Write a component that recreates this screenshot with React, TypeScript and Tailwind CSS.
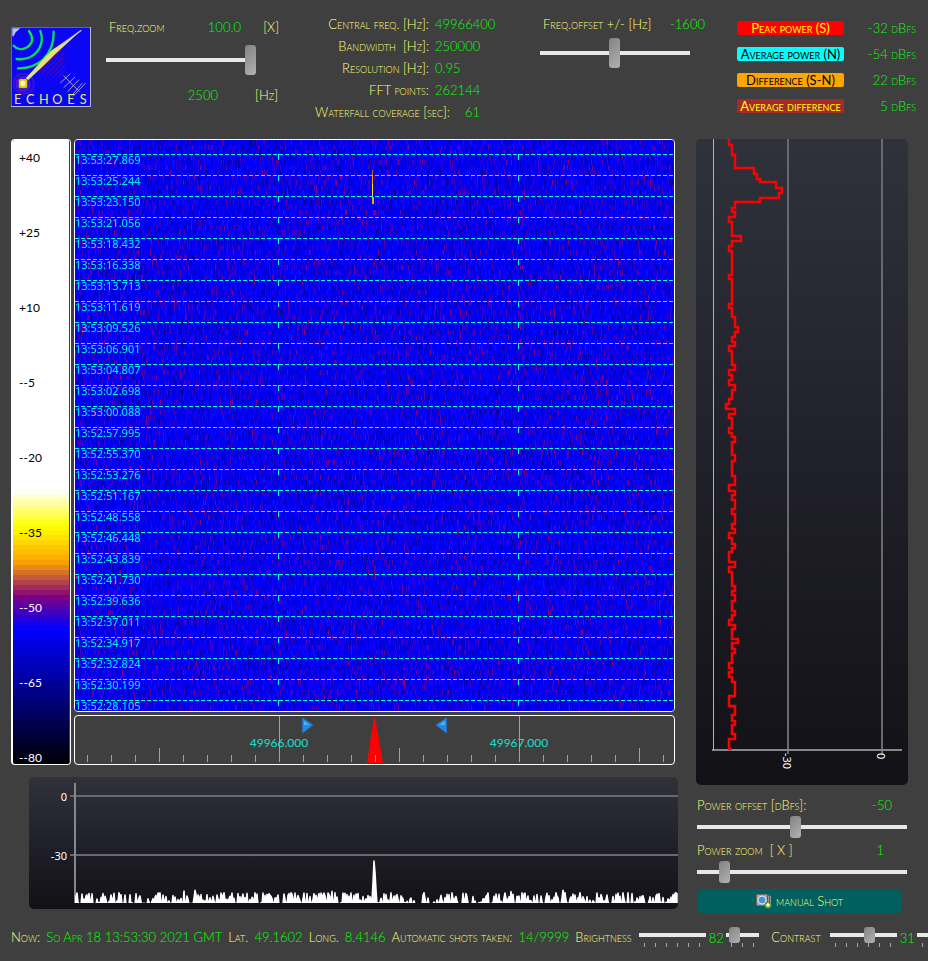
import { useLayoutEffect, useRef, useState } from "react";
import clsx from "clsx";

const times = [
  "13:53:27.869", "13:53:25.244", "13:53:23.150", "13:53:21.056", "13:53:18.432", "13:53:16.338",
  "13:53:13.713", "13:53:11.619", "13:53:09.526", "13:53:06.901", "13:53:04.807", "13:53:02.698",
  "13:53:00.088", "13:52:57.995", "13:52:55.370", "13:52:53.276", "13:52:51.167", "13:52:48.558",
  "13:52:46.448", "13:52:43.839", "13:52:41.730", "13:52:39.636", "13:52:37.011", "13:52:34.917",
  "13:52:32.824", "13:52:30.199", "13:52:28.105",
];

const scaleLabels = ["+40", "+25", "+10", "--5", "--20", "--35", "--50", "--65", "--80"];

// palette stops: distance from the top of the scale in px, then r, g, b
const stops = [
  [350, 255, 255, 255],
  [386, 255, 255, 0],
  [421, 255, 165, 0],
  [456, 128, 0, 128],
  [488, 0, 0, 255],
  [626, 0, 0, 0],
];

// power history: [dB step, end of the step in px]
const history = [
  [1, 6], [2, 16], [3, 29], [9, 35], [10, 40], [11, 43], [16, 49], [18, 54], [17, 59], [11, 63],
  [3, 69], [2, 73], [3, 78], [1, 83], [2, 97], [5, 102], [2, 107], [1, 112], [2, 136], [1, 140],
  [2, 165], [1, 169], [2, 178], [3, 188], [4, 193], [3, 198], [2, 203], [3, 207], [1, 212], [2, 226],
  [3, 231], [1, 236], [2, 241], [1, 246], [3, 251], [2, 260], [1, 265], [0, 270], [3, 275], [1, 279],
  [2, 289], [1, 294], [2, 298], [3, 303], [2, 316], [3, 322], [2, 337], [3, 346], [1, 352], [3, 356],
  [2, 361], [3, 370], [2, 375], [3, 385], [2, 390], [3, 394], [1, 399], [2, 405], [3, 409], [2, 413],
  [1, 423], [3, 428], [1, 433], [2, 447], [3, 452], [2, 456], [3, 462], [2, 472], [3, 476], [2, 481],
  [1, 486], [3, 490], [2, 500], [4, 504], [2, 510], [3, 514], [2, 524], [1, 529], [2, 533], [1, 538],
  [2, 543], [3, 557], [1, 567], [3, 576], [2, 582], [3, 586], [2, 595], [3, 600], [1, 610],
];

const caps = "[font-variant:small-caps]";

const createRandom = (seed: number) => () => {
  seed = (seed * 1664525 + 1013904223) % 4294967296;
  return seed / 4294967296;
};

const paletteColor = (y: number) => {
  if (y <= stops[0][0]) return "#fff";
  const next = stops.findIndex((stop) => stop[0] > y);
  const from = stops[next - 1];
  const to = stops[next];
  const t = (y - from[0]) / (to[0] - from[0]);
  const mix = [1, 2, 3].map((i) => Math.round(from[i] + (to[i] - from[i]) * t));
  return `rgb(${mix.join(",")})`;
};

interface SliderProps {
  label: string;
  min: number;
  max: number;
  value: number;
  onChange: (value: number) => void;
  className?: string;
}

const Slider = ({ label, min, max, value, onChange, className }: SliderProps) => (
  <input
    type="range"
    aria-label={label}
    min={min}
    max={max}
    value={value}
    onChange={(e) => onChange(Number(e.target.value))}
    className={clsx(
      "block appearance-none bg-[linear-gradient(#e6e9e7,#e6e9e7)] bg-[length:100%_4px] bg-center bg-no-repeat",
      "[&::-webkit-slider-thumb]:appearance-none [&::-webkit-slider-thumb]:w-[11px] [&::-webkit-slider-thumb]:rounded-[3px]",
      "[&::-webkit-slider-thumb]:bg-[linear-gradient(135deg,#828282,#b2b2b2)]",
      className
    )}
  />
);

const Logo = () => (
  <svg viewBox="0 0 240 240" className="size-20 shrink-0" role="img" aria-label="Echoes">
    <rect width="240" height="240" fill="#0b06f4" />
    <path d="M1.500 240V1.500H240" fill="none" stroke="#5a5af0" strokeWidth="3" />
    <path d="M0 238.500H238.500V0" fill="none" stroke="#b9b9f5" strokeWidth="3" />
    <path d="M4 4H28L14 16L8 28H4Z" fill="#b8c8d8" />
    <g fill="none" stroke="#08e04c" strokeWidth="7" strokeLinecap="round">
      <path d="M54 12C68 32 66 48 50 60C34 70 18 68 8 56" />
      <path d="M88 12C98 38 90 66 70 82C52 97 34 98 17 96" />
      <path d="M128 14C129 48 118 76 96 98C74 118 50 125 21 124" />
    </g>
    <g stroke="#6c0a92" strokeWidth="3">
      <path d="M152 68L86 134M160 76L90 142M158 90L104 144M162 100L116 146M162 114L128 148M162 130L142 150M148 70L110 108" />
    </g>
    <g fill="none" stroke="#5a16c8" strokeWidth="6">
      <circle cx="36" cy="171" r="20" />
      <circle cx="38" cy="170" r="30" opacity=".6" />
    </g>
    <path d="M211 10L122 70L84 110L44 154L52 159L100 114L130 84Z" fill="#e6e27a" />
    <path d="M211 10L150 54" stroke="#c9c9a4" strokeWidth="4" />
    <rect x="23" y="156" width="26" height="28" rx="6" fill="#e9c800" />
    <rect x="29" y="161" width="14" height="16" rx="5" fill="#fffbc4" />
    <g stroke="#a0a0d8" strokeWidth="3">
      <path d="M158 146L205 194M178 140L148 168M192 150L158 182M204 158L170 194M214 168L182 206M224 168L186 208" />
    </g>
    <text y="232" fontSize="38" fill="#ecec62" fontWeight="400" fontFamily="Lato, sans-serif">
      {["E", "C", "H", "O", "E", "S"].map((letter, i) => (
        <tspan key={i} x={[9, 45, 84, 124, 169, 206][i]}>{letter}</tspan>
      ))}
    </text>
  </svg>
);

const Waterfall = () => {
  const ref = useRef<HTMLCanvasElement>(null);

  useLayoutEffect(() => {
    const canvas = ref.current;
    const ctx = canvas?.getContext("2d");
    if (!canvas || !ctx) return;
    const { width, height } = canvas;
    const random = createRandom(49966400);

    for (let y = 0; y < height; y += 5) {
      for (let x = 0; x < width; x++) {
        const r = random();
        if (r < 0.36) ctx.fillStyle = "#0000ff";
        else if (r < 0.52) ctx.fillStyle = "#0000e6";
        else if (r < 0.66) ctx.fillStyle = "#0000d0";
        else if (r < 0.7) ctx.fillStyle = "#0000a8";
        else if (r < 0.83) ctx.fillStyle = "#1c00e3";
        else if (r < 0.9) ctx.fillStyle = "#3a00c5";
        else if (r < 0.93) ctx.fillStyle = "#5a00a6";
        else if (r < 0.94) ctx.fillStyle = "#800080";
        else ctx.fillStyle = "#0000f0";
        ctx.fillRect(x, y, 1, 5);
      }
    }

    // meteor echo
    ctx.fillStyle = "#c06030";
    ctx.fillRect(297, 30, 1, 10);
    ctx.fillStyle = "#ffa500";
    ctx.fillRect(297, 35, 1, 25);
    ctx.fillStyle = "#ffe800";
    ctx.fillRect(297, 44, 1, 16);
    ctx.fillStyle = "#ffa500";
    ctx.fillRect(297, 57, 2, 7);

    ctx.fillStyle = "#00ffff";
    for (let y = 14; y < height; y += 21) {
      for (let x = 0; x < width; x += 6) ctx.fillRect(x, y, 4, 1);
      ctx.fillRect(203, y, 1, 6);
      ctx.fillRect(443, y, 1, 6);
    }
  }, []);

  return (
    <div className="relative h-[573px] overflow-hidden rounded-sm border border-white">
      <canvas ref={ref} width={599} height={571} className="h-full w-full" />
      <ul className="absolute inset-x-0 top-3.5 font-['Noto_Sans'] text-[11px] leading-[11px] font-normal text-[#00f0ff]">
        {times.map((time) => (
          <li key={time} className="h-[21px]">{time}</li>
        ))}
      </ul>
    </div>
  );
};

const Palette = () => (
  <div className="relative h-[626px] w-15 overflow-hidden rounded-sm border-y border-r border-l-2 border-white">
    <div className="border-r border-[#3f3f3f]">
      {Array.from({ length: 125 }, (_, i) => (
        <div key={i} className="h-[5px]" style={{ background: paletteColor(i * 5 + 2) }} />
      ))}
    </div>
    <ul className="absolute inset-x-0 top-2 text-[12px] leading-5 font-normal">
      {scaleLabels.map((label, i) => (
        <li key={label} className={clsx("h-[75px] pl-1.5", i > 5 ? "text-white" : "text-black")}>{label}</li>
      ))}
    </ul>
  </div>
);

const Ruler = () => (
  <div className="h-[50px] rounded-sm border border-white">
    <svg viewBox="0 0 599 48" className="block h-full w-full">
      <path d="M292 47L299 1H300L308 47Z" fill="#f00" />
      {Array.from({ length: 25 }, (_, i) => {
        const top = i % 10 === 8 ? 0 : i % 5 === 3 ? 32 : 39;
        return <rect key={i} x={12 + i * 24} y={top} width="1" height={46 - top} fill="#a0a0a0" />;
      })}
      <path d="M227.500 2L238 9L227.500 17Z" fill="#1f8ce0" stroke="#2c6fb8" />
      <path d="M229 5L235 9H229Z" fill="#4db4f5" />
      <path d="M371.500 2L361 9L371.500 17Z" fill="#1f8ce0" stroke="#2c6fb8" />
      <path d="M370 5L364 9H370Z" fill="#4db4f5" />
      <g fill="#16e0d0" fontFamily="Lato, sans-serif" fontSize="12" fontWeight="400" textAnchor="middle">
        <text x="204" y="31">49966.000</text>
        <text x="444" y="31">49967.000</text>
      </g>
    </svg>
  </div>
);

const Spectrum = () => {
  const random = createRandom(262144);
  let line = "M46 125";
  for (let x = 47; x < 649; x++) {
    let y = 127 - Math.max(0, random() - 0.4) * 19;
    if (random() > 0.94) y -= 5;
    if (x === 344) y = 105;
    if (x === 345) y = 84;
    if (x === 346) y = 95;
    if (x === 347) y = 112;
    line += `L${x} ${y.toFixed(1)}`;
  }

  return (
    <div className="mt-3 ml-[18px] h-[132px] overflow-hidden rounded-[5px] bg-linear-to-b from-[#2f323b] via-[#20202a] to-[#121116]">
      <svg viewBox="0 0 649 132" className="block h-full w-full">
        <clipPath id="plot">
          <rect x="46" width="603" height="126" />
        </clipPath>
        <path d="M41 19H649M41 78H649" stroke="#68686e" strokeWidth="2" />
        <path d="M46 6V126" stroke="#86878c" strokeWidth="2" />
        <path d={`${line}V127H46Z`} clipPath="url(#plot)" fill="#fff" stroke="#fff" strokeWidth="1.500" strokeLinejoin="round" />
        <g fill="#fff" fontFamily="'Noto Sans', sans-serif" fontSize="11" fontWeight="400" textAnchor="end">
          <text x="38" y="24">0</text>
          <text x="38" y="83">-30</text>
        </g>
      </svg>
    </div>
  );
};

const PowerHistory = () => {
  let line = "M33 0";
  history.forEach(([level, end]) => {
    const x = Math.round(29.500 + level * 3.15);
    line += `H${x}V${end}`;
  });

  return (
    <div className="h-[646px] overflow-hidden rounded-[5px] bg-linear-to-b from-[#2f323b] via-[#20202a] to-[#121116]">
      <svg viewBox="0 0 212 646" className="block h-full w-full">
        <path d="M92 0V615M186 0V615" stroke="#68686e" strokeWidth="2" />
        <path d="M16 611H206" stroke="#86878c" strokeWidth="2" />
        <path d="M17.500 0V611" stroke="#00ffff" />
        <path d={`${line}H36`} fill="none" stroke="#f00" strokeWidth="2.500" />
        <g fill="#fff" fontFamily="'Noto Sans', sans-serif" fontSize="11" fontWeight="400">
          <text transform="translate(87 614) rotate(90)">-30</text>
          <text transform="translate(181 614) rotate(90)">0</text>
        </g>
      </svg>
    </div>
  );
};

const CameraIcon = () => (
  <svg viewBox="0 0 16 16" className="size-4">
    <rect x="0.500" y="1.500" width="12" height="11" rx="1" fill="#a8a8a8" stroke="#6f6f6f" />
    <rect x="11" y="2" width="4" height="10" fill="#5b5b5b" />
    <path d="M12.500 3V11M14.500 3V11" stroke="#999" />
    <circle cx="6" cy="7" r="4" fill="#4f8fd8" stroke="#dceaf8" />
    <circle cx="12" cy="12" r="3.500" fill="#5f9a2a" />
    <path d="M12 10V14M10 12H14" stroke="#fff" strokeWidth="1.400" />
  </svg>
);

const settings = [
  { label: "Central freq. [Hz]:", value: "49966400" },
  { label: "Bandwidth  [Hz]:", value: "250000" },
  { label: "Resolution [Hz]:", value: "0.95" },
  { label: "FFT points:", value: "262144" },
];

const powers = [
  { label: "Peak power (S)", value: "-32 dBfs", className: "bg-[#ff0000] text-[#ffff00]" },
  { label: "Average power (N)", value: "-54 dBfs", className: "bg-[#00ffff] text-black" },
  { label: "Difference (S-N)", value: "22 dBfs", className: "bg-[#ffa500] text-black" },
  { label: "Average difference", value: "5 dBfs", className: "bg-[#a52a2a] text-[#ffff00]" },
];

interface TickSliderProps {
  label: string;
  value: number;
  onChange: (value: number) => void;
}

const TickSlider = ({ label, value, onChange }: TickSliderProps) => (
  <div className="relative w-30 shrink-0">
    <Slider label={label} min={0} max={100} value={value} onChange={onChange} className="h-4 w-full [&::-webkit-slider-thumb]:h-4" />
    <div className="flex justify-between px-[5px]">
      {Array.from({ length: 11 }, (_, i) => <i key={i} className="h-1 w-px bg-[#a8a890]" />)}
    </div>
    <output className="absolute top-0.5 left-[67px] h-[18px] w-5 bg-[#3f3f3f] text-center leading-[18px] text-[#00ff00]">{value}</output>
  </div>
);

export default function App() {
  const [zoom, setZoom] = useState(100);
  const [offset, setOffset] = useState(-1600);
  const [powerOffset, setPowerOffset] = useState(-50);
  const [powerZoom, setPowerZoom] = useState(1);
  const [brightness, setBrightness] = useState(82);
  const [contrast, setContrast] = useState(31);

  return (
    <div className={clsx("min-h-screen overflow-hidden bg-[#3f3f3f] font-[Lato,sans-serif] text-[13px] leading-5 font-light text-[#ffff78]", caps)}>
      <header className="flex h-[139px] gap-8 pr-3 pl-[11px] whitespace-nowrap">
        <div className="flex gap-[15px] pt-[27px]">
          <Logo />
          <div className="-mt-[10px] w-[177px]">
            <div className="flex pl-[3px]">
              <span className="w-[55px] overflow-hidden">Freq.zoom</span>
              <span className="w-[77px] text-right text-[#00ff00]">{zoom.toFixed(1)}</span>
              <span className="w-[38px] text-right">[X]</span>
            </div>
            <Slider label="Frequency zoom" min={1} max={100} value={zoom} onChange={setZoom} className="mt-[7px] h-8 w-[150px] [&::-webkit-slider-thumb]:h-[30px]" />
            <div className="mt-[9px] flex">
              <span className="w-28 text-right text-[#00ff00]">2500</span>
              <span className="w-15 text-right">[Hz]</span>
            </div>
          </div>
        </div>
        <div className="w-[193px] pt-3.5">
          {settings.map(({ label, value }) => (
            <div key={label} className="flex h-[22px] gap-1.5">
              <span className="w-[114px] text-right whitespace-pre">{label}</span>
              <span className="text-[#00ff00]">{value}</span>
            </div>
          ))}
          <div className="flex gap-1.5">
            <span className="w-36">Waterfall coverage [sec]:</span>
            <span className="text-[#00ff00]">61</span>
          </div>
        </div>
        <div className="w-[165px] pt-3.5">
          <div className="flex justify-between pl-[3px]">
            <span>Freq.offset +/- [Hz]</span>
            <span className="text-[#00ff00]">{offset}</span>
          </div>
          <Slider label="Frequency offset" min={-125000} max={125000} value={offset} onChange={setOffset} className="mt-[3px] h-8 w-[150px] [&::-webkit-slider-thumb]:h-[30px]" />
        </div>
        <dl className="flex flex-1 flex-col gap-3 pt-[21px] leading-[14px]">
          {powers.map(({ label, value, className }) => (
            <div key={label} className="flex justify-between">
              <dt className={clsx("w-[107px] rounded-xs text-center font-normal", className)}>{label}</dt>
              <dd className="text-[#00ff00]">{value}</dd>
            </div>
          ))}
        </dl>
      </header>

      <main className="flex gap-[18px] pr-5 pl-[11px]">
        <div className="flex-1">
          <div className="flex gap-[3px] pr-[3px]">
            <Palette />
            <div className="flex flex-1 flex-col gap-[3px]">
              <Waterfall />
              <Ruler />
            </div>
          </div>
          <Spectrum />
        </div>
        <aside className="w-53">
          <PowerHistory />
          <div className="mt-2.5 flex justify-between pr-4 pl-px">
            <span>Power offset [dBfs]:</span>
            <span className="text-[#00ff00]">{powerOffset}</span>
          </div>
          <Slider label="Power offset" min={-120} max={30} value={powerOffset} onChange={setPowerOffset} className="mt-px ml-px h-[22px] w-[210px] [&::-webkit-slider-thumb]:h-[22px]" />
          <div className="mt-0.5 flex justify-between pr-6 pl-px">
            <span className="whitespace-pre">Power zoom  [ X ]</span>
            <span className="text-[#00ff00]">{powerZoom}</span>
          </div>
          <Slider label="Power zoom" min={0} max={9} value={powerZoom} onChange={setPowerZoom} className="mt-px ml-px h-[22px] w-[210px] [&::-webkit-slider-thumb]:h-[22px]" />
          <button className={clsx("mt-1.5 ml-px flex h-6 w-[205px] items-center justify-center gap-1 rounded-md bg-[#006060]", caps)}>
            <CameraIcon />
            manual Shot
          </button>
        </aside>
      </main>

      <footer className="mt-[14px] flex gap-1.5 pl-[11px] whitespace-nowrap">
        <span>Now:</span>
        <span className="text-[#00ff00]">So Apr 18 13:53:30 2021 GMT</span>
        <span>Lat.</span>
        <span className="text-[#00ff00]">49.1602</span>
        <span>Long.</span>
        <span className="text-[#00ff00]">8.4146</span>
        <span>Automatic shots taken:</span>
        <span className="text-[#00ff00]">14/9999</span>
        <span className="w-[58px] shrink-0">Brightness</span>
        <TickSlider label="Brightness" value={brightness} onChange={setBrightness} />
        <span className="ml-1.5 w-[53px] shrink-0">Contrast</span>
        <TickSlider label="Contrast" value={contrast} onChange={setContrast} />
      </footer>
    </div>
  );
}
